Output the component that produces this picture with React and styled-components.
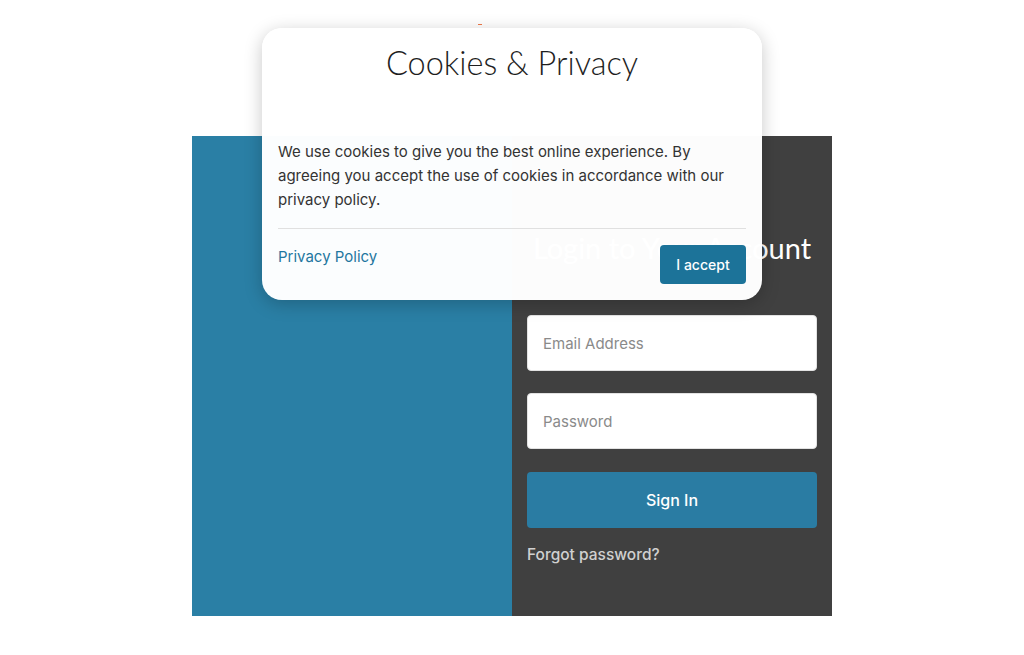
import React from 'react'
import styled, { createGlobalStyle } from 'styled-components'

const GlobalStyle = createGlobalStyle`
  html, body {
    margin: 0;
    padding: 0;
    background: #ffffff;
    font-family: Inter, 'Open Sans', sans-serif;
  }
  * { box-sizing: border-box; }
`

const Page = styled.div`
  width: 100%;
  min-height: 655px;
  padding-top: 136px;
  display: flex;
  justify-content: center;
  position: relative;
`

const Card = styled.div`
  width: 640px;
  height: 480px;
  display: grid;
  grid-template-columns: 1fr 1fr;
`

const Side = styled.div`
  background: #2a7fa5;
`

const LoginPanel = styled.div`
  background: #404040;
  padding: 94px 15px 0;
  display: flex;
  flex-direction: column;
`

const Heading = styled.h2`
  margin: 0 0 49px;
  height: 36px;
  line-height: 36px;
  text-align: center;
  font-family: Lato, sans-serif;
  font-weight: 400;
  font-size: 29px;
  color: #ffffff;
  white-space: nowrap;
`

const Field = styled.input`
  width: 100%;
  height: 56px;
  border: 1px solid #e2e2e2;
  border-radius: 4px;
  background: #ffffff;
  padding: 0 15px;
  font-family: Inter, sans-serif;
  font-size: 15px;
  margin-bottom: ${p => p.gap}px;
  outline: none;
  &::placeholder { color: #8a8a8a; }
`

const SignIn = styled.button`
  width: 100%;
  height: 56px;
  border: none;
  border-radius: 4px;
  background: #2a7ca3;
  color: #ffffff;
  font-family: Inter, sans-serif;
  font-size: 16px;
  font-weight: 500;
  margin-bottom: 17px;
`

const Forgot = styled.a`
  color: #d0d0d0;
  font-size: 15.5px;
  font-weight: 500;
  line-height: 20px;
  text-decoration: none;
`

const Mark = styled.div`
  position: absolute;
  left: 478px;
  top: 24px;
  width: 4px;
  height: 1px;
  background: #f07a4a;
`

const Modal = styled.div`
  position: absolute;
  left: 262px;
  top: 28px;
  width: 500px;
  height: 272px;
  border-radius: 20px;
  background: rgba(255, 255, 255, 0.985);
  box-shadow: 0 4px 18px rgba(0, 0, 0, 0.22);
  padding: 0 16px;
  display: flex;
  flex-direction: column;
`

const Title = styled.h1`
  margin: 0;
  height: 112px;
  padding-top: 16px;
  text-align: center;
  font-family: Lato, sans-serif;
  font-weight: 300;
  font-size: 32.5px;
  line-height: 38px;
  color: #1e1e1e;
`

const Text = styled.p`
  margin: 0;
  font-size: 15px;
  line-height: 24px;
  color: #333333;
  padding-bottom: 16px;
  border-bottom: 1px solid #e0e0e0;
`

const Footer = styled.div`
  display: flex;
  justify-content: space-between;
  align-items: flex-start;
  padding-top: 16px;
`

const PolicyLink = styled.a`
  color: #1f77a0;
  font-size: 15px;
  line-height: 24px;
  text-decoration: none;
`

const Accept = styled.button`
  width: 86px;
  height: 39px;
  border: none;
  border-radius: 4px;
  background: #1c7399;
  color: #ffffff;
  font-family: Inter, sans-serif;
  font-size: 14px;
  font-weight: 500;
`

export default function App() {
  return (
    <Page>
      <GlobalStyle />
      <Card>
        <Side />
        <LoginPanel>
          <Heading>Login to Your Account</Heading>
          <Field placeholder='Email Address' gap={22} />
          <Field type='password' placeholder='Password' gap={23} />
          <SignIn>Sign In</SignIn>
          <Forgot href='#'>Forgot password?</Forgot>
        </LoginPanel>
      </Card>
      <Mark />
      <Modal>
        <Title>Cookies &amp; Privacy</Title>
        <Text>
          We use cookies to give you the best online experience. By agreeing you accept the use of cookies in accordance with our privacy policy.
        </Text>
        <Footer>
          <PolicyLink href='#'>Privacy Policy</PolicyLink>
          <Accept>I accept</Accept>
        </Footer>
      </Modal>
    </Page>
  )
}
